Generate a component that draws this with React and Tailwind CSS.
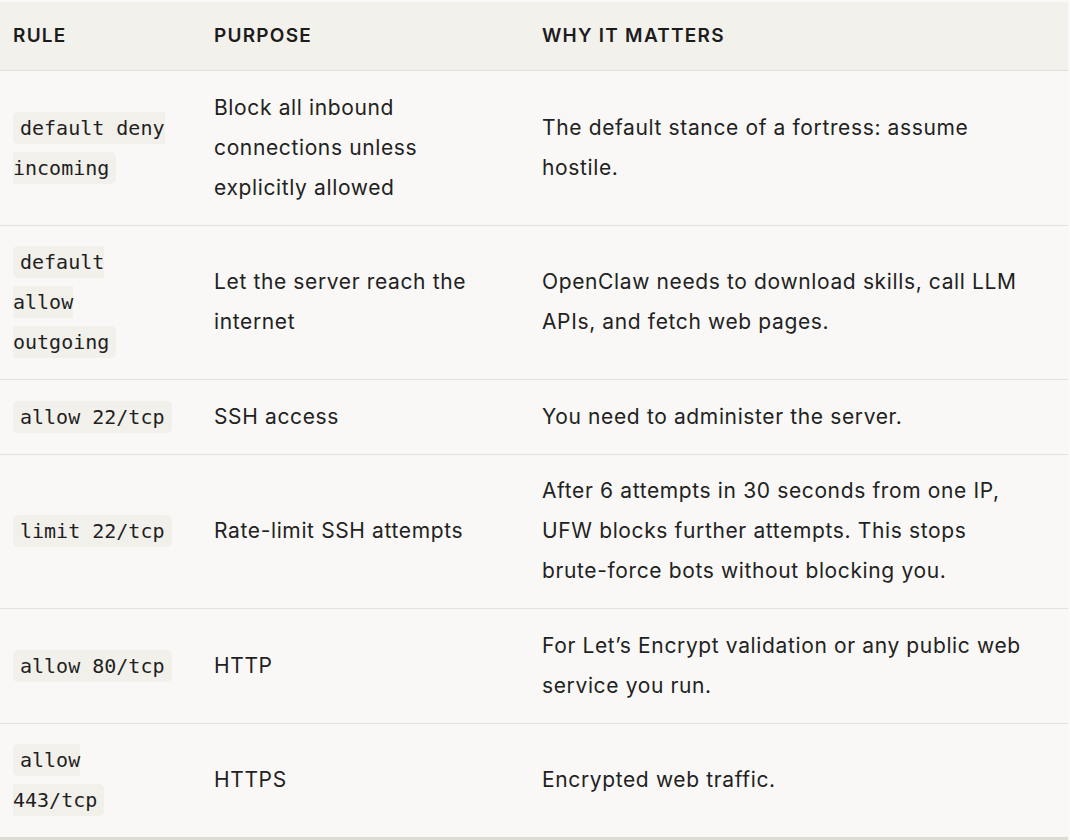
import React from "react";

const rows = [
  {
    rule: ["default deny", "incoming"],
    purpose: ["Block all inbound", "connections unless", "explicitly allowed"],
    why: ["The default stance of a fortress: assume", "hostile."],
  },
  {
    rule: ["default", "allow", "outgoing"],
    purpose: ["Let the server reach the", "internet"],
    why: ["OpenClaw needs to download skills, call LLM", "APIs, and fetch web pages."],
  },
  { rule: ["allow 22/tcp"], purpose: ["SSH access"], why: ["You need to administer the server."] },
  {
    rule: ["limit 22/tcp"],
    purpose: ["Rate-limit SSH attempts"],
    why: [
      "After 6 attempts in 30 seconds from one IP,",
      "UFW blocks further attempts. This stops",
      "brute-force bots without blocking you.",
    ],
  },
  {
    rule: ["allow 80/tcp"],
    purpose: ["HTTP"],
    why: ["For Let\u2019s Encrypt validation or any public web", "service you run."],
  },
  { rule: ["allow", "443/tcp"], purpose: ["HTTPS"], why: ["Encrypted web traffic."] },
];

function Lines({ lines }) {
  return lines.map((p, i) => (
    <React.Fragment key={i}>
      {i > 0 && <br />}
      {p}
    </React.Fragment>
  ));
}

function Code({ parts }) {
  return (
    <code
      className="rounded-[5px] bg-[#f2f0eb] px-[7px] py-[4px] text-[20px] text-[#1f1f1f]"
      style={{ fontFamily: '"DejaVu Sans Mono", "Liberation Mono", monospace' }}
    >
      <Lines lines={parts} />
    </code>
  );
}

export default function App() {
  return (
    <div
      className="min-h-[840px] w-[1070px] bg-[#faf9f7] pt-[2px]"
      style={{ fontFamily: 'Inter, "Noto Sans", sans-serif' }}
    >
      <table className="w-[1068px] table-fixed border-collapse border-b-[3px] border-[#dfdcd5] bg-[#f9f8f6] text-[21px] leading-[40px] tracking-[0.03em] text-[#222222]">
        <colgroup>
          <col className="w-[201px]" />
          <col className="w-[328px]" />
          <col className="w-[539px]" />
        </colgroup>
        <thead>
          <tr className="border-b border-[#e2dfd8] bg-[#f3f1ec]">
            {["Rule", "Purpose", "Why it matters"].map((h) => (
              <th
                key={h}
                className="px-[13px] py-[17px] text-left text-[19px] font-semibold uppercase leading-[34px] tracking-[0.065em] text-[#1c1c1c]"
              >
                {h}
              </th>
            ))}
          </tr>
        </thead>
        <tbody>
          {rows.map((r, i) => (
            <tr key={i} className={i < rows.length - 1 ? "border-b border-[#e4e1db]" : ""}>
              <td className="whitespace-nowrap px-[13px] py-[16.75px] align-middle tracking-normal">
                <Code parts={r.rule} />
              </td>
              <td className="whitespace-nowrap px-[13px] py-[16.75px] align-middle">
                <Lines lines={r.purpose} />
              </td>
              <td className="whitespace-nowrap px-[13px] py-[16.75px] align-middle">
                <Lines lines={r.why} />
              </td>
            </tr>
          ))}
        </tbody>
      </table>
    </div>
  );
}
